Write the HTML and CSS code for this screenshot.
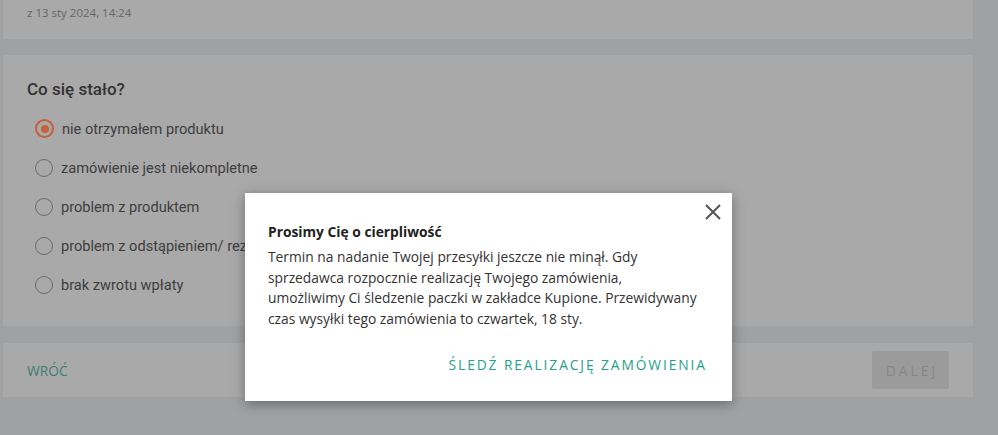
FILE: index.html
```html
<!DOCTYPE html>
<html lang="pl">
<head>
    <meta charset="UTF-8">
    <meta name="viewport" content="width=device-width, initial-scale=1.0">
    <title>Co się stało?</title>
    <link rel="stylesheet" href="styles.css">
</head>
<body>
    <div class="page">
        <div class="card card-order">
            <span class="order-date">z 13 sty 2024, 14:24</span>
        </div>

        <div class="card card-reason">
            <h2 class="reason-title">Co się stało?</h2>
            <label class="radio-row">
                <span class="radio checked"></span>
                nie otrzymałem produktu
            </label>
            <label class="radio-row">
                <span class="radio"></span>
                zamówienie jest niekompletne
            </label>
            <label class="radio-row">
                <span class="radio"></span>
                problem z produktem
            </label>
            <label class="radio-row">
                <span class="radio"></span>
                problem z odstąpieniem/ rezygnacją z zakupu
            </label>
            <label class="radio-row">
                <span class="radio"></span>
                brak zwrotu wpłaty
            </label>
        </div>

        <div class="card card-actions">
            <a class="link-back" href="#">WRÓĆ</a>
            <button class="btn-next" disabled>DALEJ</button>
        </div>
    </div>

    <div class="modal">
        <button class="modal-close" aria-label="Zamknij">
            <svg width="16" height="16" viewBox="0 0 16 16">
                <path d="M1 1 L15 15 M15 1 L1 15" stroke="#555" stroke-width="2" fill="none"/>
            </svg>
        </button>
        <h3 class="modal-title">Prosimy Cię o cierpliwość</h3>
        <p class="modal-text">Termin na nadanie Twojej przesyłki jeszcze nie minął. Gdy sprzedawca rozpocznie realizację Twojego zamówienia,<br>umożliwimy Ci śledzenie paczki w zakładce Kupione. Przewidywany czas wysyłki tego zamówienia to czwartek, 18 sty.</p>
        <div class="modal-footer">
            <a class="link-track" href="#">ŚLEDŹ REALIZACJĘ ZAMÓWIENIA</a>
        </div>
    </div>
</body>
</html>
```

FILE: styles.css
```css
body {
    margin: 0;
    background-color: #a0a1a3;
    font-family: "Open Sans", "Liberation Sans", sans-serif;
    color: #3c3c3c;
    height: 435px;
    overflow: hidden;
}
.page {
    padding: 0 25px 0 3px;
}
.card {
    background-color: #a9a9a9;
}
.card-order {
    padding: 5px 24px 18px;
    margin-bottom: 16px;
}
.order-date {
    display: block;
    font-size: 11.5px;
    line-height: 16px;
    color: #666;
}
.card-reason {
    padding: 24px 24px 22px;
    margin-bottom: 17px;
    font-family: Roboto, sans-serif;
}
.reason-title {
    margin: 0 0 10px;
    font-size: 17px;
    line-height: 20px;
    font-weight: 500;
    color: #333;
}
.radio-row {
    display: flex;
    align-items: center;
    height: 39px;
    font-size: 14.6px;
    color: #3e3e3e;
}
.radio {
    width: 16px;
    height: 16px;
    border: 1.5px solid #6b6b6b;
    border-radius: 50%;
    margin-right: 8px;
    margin-left: 8px;
    box-sizing: content-box;
    position: relative;
}
.radio.checked {
    border: 2px solid #c4603b;
    width: 15px;
    height: 15px;
}
.radio.checked::after {
    content: "";
    position: absolute;
    left: 3.5px;
    top: 3.5px;
    width: 8px;
    height: 8px;
    border-radius: 50%;
    background-color: #c4603b;
}
.card-actions {
    display: flex;
    justify-content: space-between;
    align-items: center;
    height: 54px;
    padding: 0 24px;
}
.link-back {
    font-size: 13.8px;
    color: #3e7d73;
    text-decoration: none;
}
.btn-next {
    width: 77px;
    height: 38px;
    border: none;
    border-radius: 2px;
    background-color: #9b9b9b;
    color: #868686;
    font-family: inherit;
    font-size: 13.8px;
    letter-spacing: 3px;
    padding: 0 0 0 3px;
}
.modal {
    position: absolute;
    left: 245px;
    top: 193px;
    width: 487px;
    height: 208px;
    box-sizing: border-box;
    padding: 29px 25px 0 23px;
    background-color: #fff;
    box-shadow: 0 3px 12px rgba(0, 0, 0, 0.35);
}
.modal-close {
    position: absolute;
    right: 11px;
    top: 11px;
    border: none;
    background: none;
    padding: 0;
    width: 16px;
    height: 16px;
}
.modal-title {
    margin: 0 0 5px;
    font-size: 13.8px;
    line-height: 20px;
    font-weight: 700;
    color: #222;
}
.modal-text {
    margin: 0;
    font-size: 13.8px;
    line-height: 20.7px;
    color: #333;
}
.modal-footer {
    display: flex;
    justify-content: flex-end;
    margin-top: 25px;
}
.link-track {
    font-size: 13.8px;
    letter-spacing: 1.9px;
    color: #26a08c;
    text-decoration: none;
}
```
